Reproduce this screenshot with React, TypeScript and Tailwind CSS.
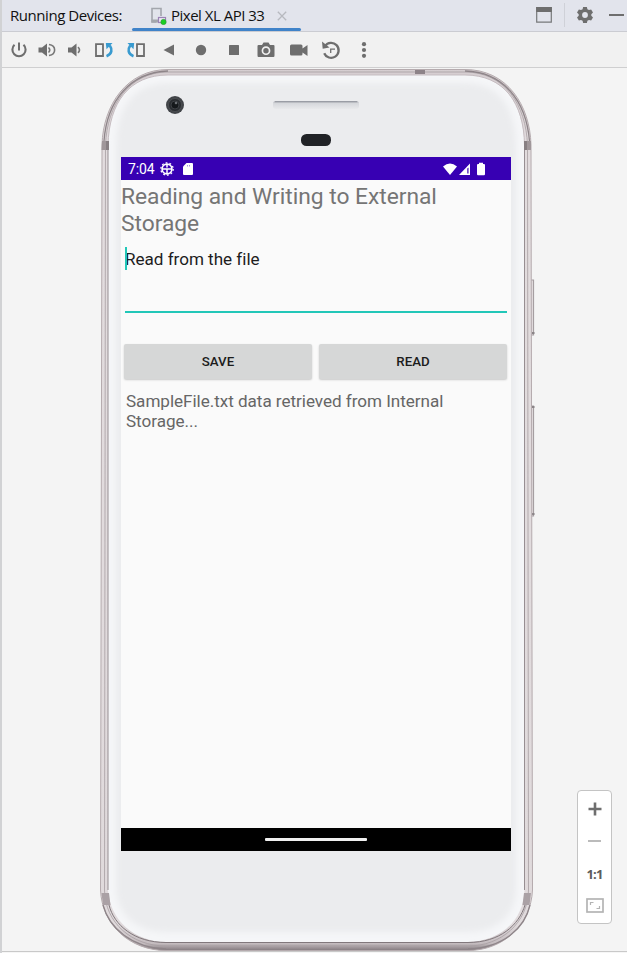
import type { ReactNode } from 'react';

function ToolIcon({ className = '', children }: { className?: string; children: ReactNode }) {
  return (
    <button className={`h-5 w-5 shrink-0 ${className}`}>
      <svg viewBox="0 0 20 20" className="block h-5 w-5" fill="#6e6e6e">
        {children}
      </svg>
    </button>
  );
}

function TitleBar() {
  return (
    <header className="flex h-8 shrink-0 border-b border-[#cbccd2] bg-[#e2e4ec] font-['Open_Sans',sans-serif] text-[15px] text-[#111]">
      <div className="w-[130px] pl-2 pt-[5px] leading-[21px] whitespace-nowrap tracking-[-0.45px]">Running Devices:</div>
      <div className="relative flex w-[169px] pl-[18px] pt-[5px]">
        <svg viewBox="0 0 18 18" className="mt-[2px] h-[18px] w-[18px] shrink-0" fill="none">
          <path d="M6.500 15H2V1.500H11V9" stroke="#a3a6ad" strokeWidth="1.600" />
          <path d="M1.500 14H8" stroke="#a3a6ad" strokeWidth="3" />
          <rect x="8.500" y="10.500" width="7" height="5" stroke="#9b83b5" strokeWidth="1.200" fill="#eee9f4" />
          <circle cx="13.500" cy="15" r="2.700" fill="#19cf22" stroke="#348a3c" strokeWidth=".5" />
        </svg>
        <span className="ml-[3px] whitespace-nowrap leading-[21px] tracking-[-0.5px]">Pixel XL API 33</span>
        <svg viewBox="0 0 10 10" className="absolute left-[145px] top-[11px] h-[10px] w-[10px]">
          <path d="M.8.8L9.200 9.200M9.200.8L.8 9.200" stroke="#b7b9bf" strokeWidth="1.300" />
        </svg>
        <span className="absolute bottom-0 left-0 h-[3px] w-[169px] rounded-sm bg-[#4083c9]" />
      </div>
      <div className="ml-auto flex items-start">
        <svg viewBox="0 0 16 16" className="mt-[7px] h-4 w-4">
          <path d="M.7.500H15.300V15.200H.7z" fill="#e2e4ec" stroke="#77787b" strokeWidth="1.200" />
          <path d="M.2 0H15.800V5H.2z" fill="#6e6e6e" />
        </svg>
        <span className="ml-3 mt-[3px] h-[24px] w-px bg-[#cfd1d8]" />
        <svg viewBox="0 0 16 16" className="ml-3 mt-[7px] h-4 w-4" fill="#6e6e6e">
          <path fillRule="evenodd" d="M6.100 0H9.900L10.400 2.200L12 3.100L14.100 2.400L16 5.600L14.300 7.200V8.800L16 10.400L14.100 13.600L12 12.900L10.400 13.800L9.900 16H6.100L5.600 13.800L4 12.900L1.900 13.600L0 10.400L1.700 8.800V7.200L0 5.600L1.900 2.400L4 3.100L5.600 2.200zM8 5.100A2.900 2.900 0 1 0 8 10.900A2.900 2.900 0 1 0 8 5.100z" />
        </svg>
        <span className="ml-4 mr-[3px] mt-[14px] h-[2px] w-[15px] bg-[#6e6e6e]" />
      </div>
    </header>
  );
}

function Toolbar() {
  return (
    <nav className="flex h-9 shrink-0 items-center border-b border-[#cfcfd0] bg-[#f1f1f1] pl-[7px]">
      <ToolIcon>
        <path d="M5.500 4.800A6.600 6.600 0 1 0 14.500 4.800" fill="none" stroke="#6e6e6e" strokeWidth="2.100" />
        <path d="M9 2.500h2v8H9z" />
      </ToolIcon>
      <ToolIcon className="ml-2">
        <path d="M1.500 7.500H5L10 3.500V16.500L5 12.500H1.500z" />
        <path d="M11.500 7.500Q14 10 11.500 12.500M12 4.500C19.500 5.500 19.500 14.500 12 15.500" fill="none" stroke="#777" strokeWidth="1.600" />
      </ToolIcon>
      <ToolIcon className="ml-[7px]">
        <path d="M4 7.500H7.500L12.500 3.500V16.500L7.500 12.500H4z" />
        <path d="M14 7.200Q17 10 14 12.800" fill="none" stroke="#777" strokeWidth="1.700" />
      </ToolIcon>
      <ToolIcon className="ml-2.5">
        <path d="M2 4.200H9V16H2z" fill="none" stroke="#6e6e6e" strokeWidth="1.800" />
        <path d="M12.500 16.200C18.500 14 18.200 9 15.800 5.500" fill="none" stroke="#399bd0" strokeWidth="2.600" />
        <path d="M11.800 3H18.500L12.500 9.300z" fill="#399bd0" />
      </ToolIcon>
      <ToolIcon className="ml-3">
        <path d="M11 4.200H18V16H11z" fill="none" stroke="#6e6e6e" strokeWidth="1.800" />
        <path d="M7.500 16.200C1.500 14 1.800 9 4.200 5.500" fill="none" stroke="#399bd0" strokeWidth="2.600" />
        <path d="M8.200 3H1.500L7.500 9.300z" fill="#399bd0" />
      </ToolIcon>
      <ToolIcon className="ml-[13px]"><path d="M4.500 10L15 4.500V15.500z" /></ToolIcon>
      <ToolIcon className="ml-3"><circle cx="10" cy="10" r="5.200" /></ToolIcon>
      <ToolIcon className="ml-[13px]"><rect x="5" y="5" width="10" height="10" rx=".5" /></ToolIcon>
      <ToolIcon className="ml-3">
        <path fillRule="evenodd" d="M2.500 5H6L7.500 2.500H12.500L14 5H17.500Q18.500 5 18.500 6V15.500Q18.500 17 17.500 17H2.500Q1.500 17 1.500 15.500V6Q1.500 5 2.500 5zM10 6.300A4.400 4.400 0 1 0 10 15.100A4.400 4.400 0 1 0 10 6.300z" />
        <circle cx="10" cy="10.700" r="2.700" />
      </ToolIcon>
      <ToolIcon className="ml-[13px]">
        <path d="M2.500 4.500H12Q13.500 4.500 13.500 6V8.500L18.500 5V16L13.500 12.500V14Q13.500 15.500 12 15.500H2.500Q1 15.500 1 14V6Q1 4.500 2.500 4.500z" />
      </ToolIcon>
      <ToolIcon className="ml-3">
        <path d="M4 6A7.500 7.500 0 1 1 3.200 13.200" fill="none" stroke="#6e6e6e" strokeWidth="2.300" />
        <path d="M1 1.500L1.700 8.700L8.500 7.500z" />
        <path d="M9.700 13V9.200H14" fill="none" stroke="#6e6e6e" strokeWidth="1.300" />
      </ToolIcon>
      <ToolIcon className="ml-[13px]">
        <circle cx="10" cy="4.200" r="2.100" /><circle cx="10" cy="10" r="2.100" /><circle cx="10" cy="15.800" r="2.100" />
      </ToolIcon>
    </nav>
  );
}

function DeviceFrame() {
  return (
    <svg viewBox="98 68 440 883" className="absolute inset-0 h-[883px] w-[440px]" fill="none">
      <defs>
        <linearGradient id="rim" x1="0" y1="0" x2="0" y2="1">
          <stop offset="0" stopColor="#d5cdd0" /><stop offset=".08" stopColor="#e2dcde" />
          <stop offset=".97" stopColor="#e0dadc" /><stop offset=".992" stopColor="#c4bcbf" /><stop offset="1" stopColor="#837a7e" />
        </linearGradient>
        <linearGradient id="speaker" x1="0" y1="0" x2="0" y2="1">
          <stop offset="0" stopColor="#a4a6ae" /><stop offset=".3" stopColor="#d6d8dc" /><stop offset="1" stopColor="#e8e9eb" />
        </linearGradient>
        <filter id="soften" x="-10%" y="-10%" width="120%" height="120%"><feGaussianBlur stdDeviation="3" /></filter>
        <clipPath id="face"><path d="M168 75H465C504 75 524 103 525 145V890C524 920 500 942 468 942H166C134 942 110 920 108 890V145C109 103 129 75 168 75z" /></clipPath>
      </defs>
      <path d="M531 280H533.500V335H531M531 406H533.500V516H531" stroke="#a59ea1" strokeWidth="1.200" fill="#e6e0e2" />
      <path d="M532 333H534.500M532 407H534.500M532 514H534.500" stroke="#8a8487" strokeWidth="2" />
      <path d="M168 69.500H465C507 69.500 530 105 531 145L532.500 890C531 925 503 950.500 468 950.500H166C130 950.500 102 925 100.500 890L102 145C103 105 127 69.500 168 69.500z" fill="url(#rim)" stroke="#b5abae" />
      <path d="M168 72H465C505 72 526 105 527.500 145L528.500 890C528 923 501 946 468 946H166C132 946 105 923 104.500 890L105.500 145C107 105 129 72 168 72z" stroke="#a79ea2" strokeWidth=".8" />
      <path d="M465 71C503 72 526 100 529.500 141M168 71C131 72 107 100 104 141M103 905C109 928 132 948 166 949M530 905C525 928 503 948 468 949" stroke="#8e8589" strokeWidth="1.300" />
      <path d="M168 75H465C504 75 523 103 524.500 145V890C524 920 500 942 468 942H166C134 942 110 920 108 890V145C109 103 129 75 168 75z" fill="#f5f6f8" />
      <g clipPath="url(#face)">
        <path d="M168 83H465C498 83 515 106 516 145V890C515 917 495 932 468 932H166C139 932 118 917 116 890V145C117 106 135 83 168 83z" fill="#ebecee" filter="url(#soften)" />
      </g>
      <path d="M524.500 145V890M108 145V890" stroke="#978e92" />
      <path d="M525 905C519 925 500 942.500 468 942.500H166C134 942.500 114 925 109 905" stroke="#81787c" />
      <path d="M168 75H465C504 75 524 103 524.500 145M168 75C129 75 109 103 108 145" stroke="#c6bdc1" />
      <path d="M102 141H109V150H101.500zM524 141H531V150H524z" fill="#a0979a" />
      <path d="M524 141H527V150H524zM106 141H109V150H106z" fill="#888083" />
      <path d="M101.500 893H109L110.500 905H103zM524 893H531L529.500 905H522.500z" fill="#aaa1a5" />
      <path d="M415 70H425V74H415z" fill="#8d8388" />
      <circle cx="175" cy="105" r="9" fill="#414448" />
      <circle cx="175" cy="105" r="6.500" fill="#292c30" stroke="#505357" strokeWidth=".8" />
      <circle cx="175" cy="105" r="4" fill="#15181b" stroke="#3d4044" />
      <circle cx="176" cy="103" r="1.300" fill="#6a6d72" />
      <rect x="273" y="101" width="86" height="8" rx="3" fill="url(#speaker)" />
      <path d="M275 101.700H357" stroke="#9699a1" />
      <rect x="301" y="134" width="30" height="12" rx="5.500" fill="#202226" />
    </svg>
  );
}

function StatusBar() {
  return (
    <div className="flex h-[23px] items-center bg-[#3700b3] pl-[7px] pr-[25px] text-white">
      <span className="w-[32px] text-[14px] leading-none tracking-[-0.1px]">7:04</span>
      <svg viewBox="0 0 14 14" className="h-[14px] w-[14px]" fill="none" stroke="#fff">
        <circle cx="7" cy="7" r="4.900" strokeWidth="1.700" />
        <circle cx="7" cy="7" r="6.200" strokeWidth="1.300" strokeDasharray="1.800 2.070" />
        <path d="M2 7H12M7 2V5.500M7 7V12" strokeWidth="1.500" />
      </svg>
      <svg viewBox="0 0 10 12" className="ml-[9px] h-3 w-[10px]" fill="#fff">
        <path d="M3.500 0H9Q10 0 10 1V11Q10 12 9 12H1Q0 12 0 11V3.500z" />
        <path d="M4 2H5V3.500H4zM6 2H7V3.500H6z" fill="#a996df" />
      </svg>
      <svg viewBox="0 0 43 14" className="ml-auto h-[14px] w-[43px]" fill="#fff">
        <path d="M0 4.500Q7 -1.500 14 4.500L7 13z" />
        <path fillRule="evenodd" d="M27 1.500V13H16zM24.300 6.500V11.500H25.500V5.500z" />
        <path d="M36 2V.800H40V2H41Q42 2 42 3V12Q42 13.200 41 13.200H35Q34 13.200 34 12V3Q34 2 35 2z" />
      </svg>
    </div>
  );
}

function Screen() {
  return (
    <section className="relative flex h-[694px] w-[390px] flex-col bg-[#fafafa] font-[Roboto,sans-serif]">
      <StatusBar />
      <h1 className="pt-1 text-[22.800px] leading-[26.700px] tracking-[-0.030px] text-[#757575]">
        Reading and Writing to External<br />Storage
      </h1>
      <div className="mx-1 mt-[10px] h-[66px] border-b-2 border-[#22c7b8] text-[#1d1d1d]">
        <p className="relative pt-px text-[17.100px] leading-[23px] tracking-[-0.02px]">
          <span className="absolute left-0 top-0 h-[23px] w-[2px] bg-[#22c7b8]" />
          Read from the file
        </p>
      </div>
      <div className="ml-[3px] mt-[31px] flex gap-[7px] text-[13.300px] font-medium text-[#1c1c1c]">
        <button className="h-[34.500px] w-[188px] rounded-[2px] bg-[#d6d7d7] shadow-[0_1px_2px_#c8c8c8]">SAVE</button>
        <button className="h-[34.500px] w-[188px] rounded-[2px] bg-[#d6d7d7] shadow-[0_1px_2px_#c8c8c8]">READ</button>
      </div>
      <p className="ml-[5px] mt-[12.500px] text-[17.100px] leading-[20px] tracking-[-0.035px] text-[#666]">
        SampleFile.txt data retrieved from Internal<br />Storage...
      </p>
      <div className="mt-auto flex h-[23px] items-center justify-center bg-black">
        <span className="h-[3px] w-[102px] rounded-[1px] bg-[#f0f0f0]" />
      </div>
    </section>
  );
}

function ZoomControls() {
  return (
    <aside className="mb-[27px] ml-auto mr-[15px] mt-auto flex h-[134px] w-[35px] flex-col items-center rounded-[4px] border border-[#c4c4c4] bg-white">
      <svg viewBox="0 0 14 14" className="mt-[11px] h-[14px] w-[14px]"><path d="M7 .5V13.500M.5 7H13.500" stroke="#6e6e6e" strokeWidth="2.600" /></svg>
      <span className="mt-[24px] h-[2px] w-[13px] bg-[#bbb]" />
      <span className="mt-[22px] font-['Open_Sans',sans-serif] text-[13px] font-bold leading-[20px] tracking-[-0.800px] text-[#5c5c5c]">1:1</span>
      <svg viewBox="0 0 18 15" className="mt-[14px] h-[15px] w-[18px]" fill="none" stroke="#b4b4b4">
        <rect x="1" y="1" width="16" height="13" strokeWidth="1.700" />
        <path d="M4.500 7V4.500H7.500M10.500 10.500H13.500V8" strokeWidth="1.200" />
      </svg>
    </aside>
  );
}

export default function App() {
  return (
    <div className="flex h-[953px] w-[627px] flex-col overflow-hidden border-l-2 border-[#d1d2d4] bg-[#f4f4f4]">
      <TitleBar />
      <Toolbar />
      <main className="flex h-[883px] shrink-0">
        <div className="relative ml-24 h-[883px] w-[440px] shrink-0 pl-[23px] pt-[89px]">
          <DeviceFrame />
          <Screen />
        </div>
        <ZoomControls />
      </main>
      <div className="h-[2px] border-t border-[#c9c9c9] bg-[#f6f6f6]" />
    </div>
  );
}
